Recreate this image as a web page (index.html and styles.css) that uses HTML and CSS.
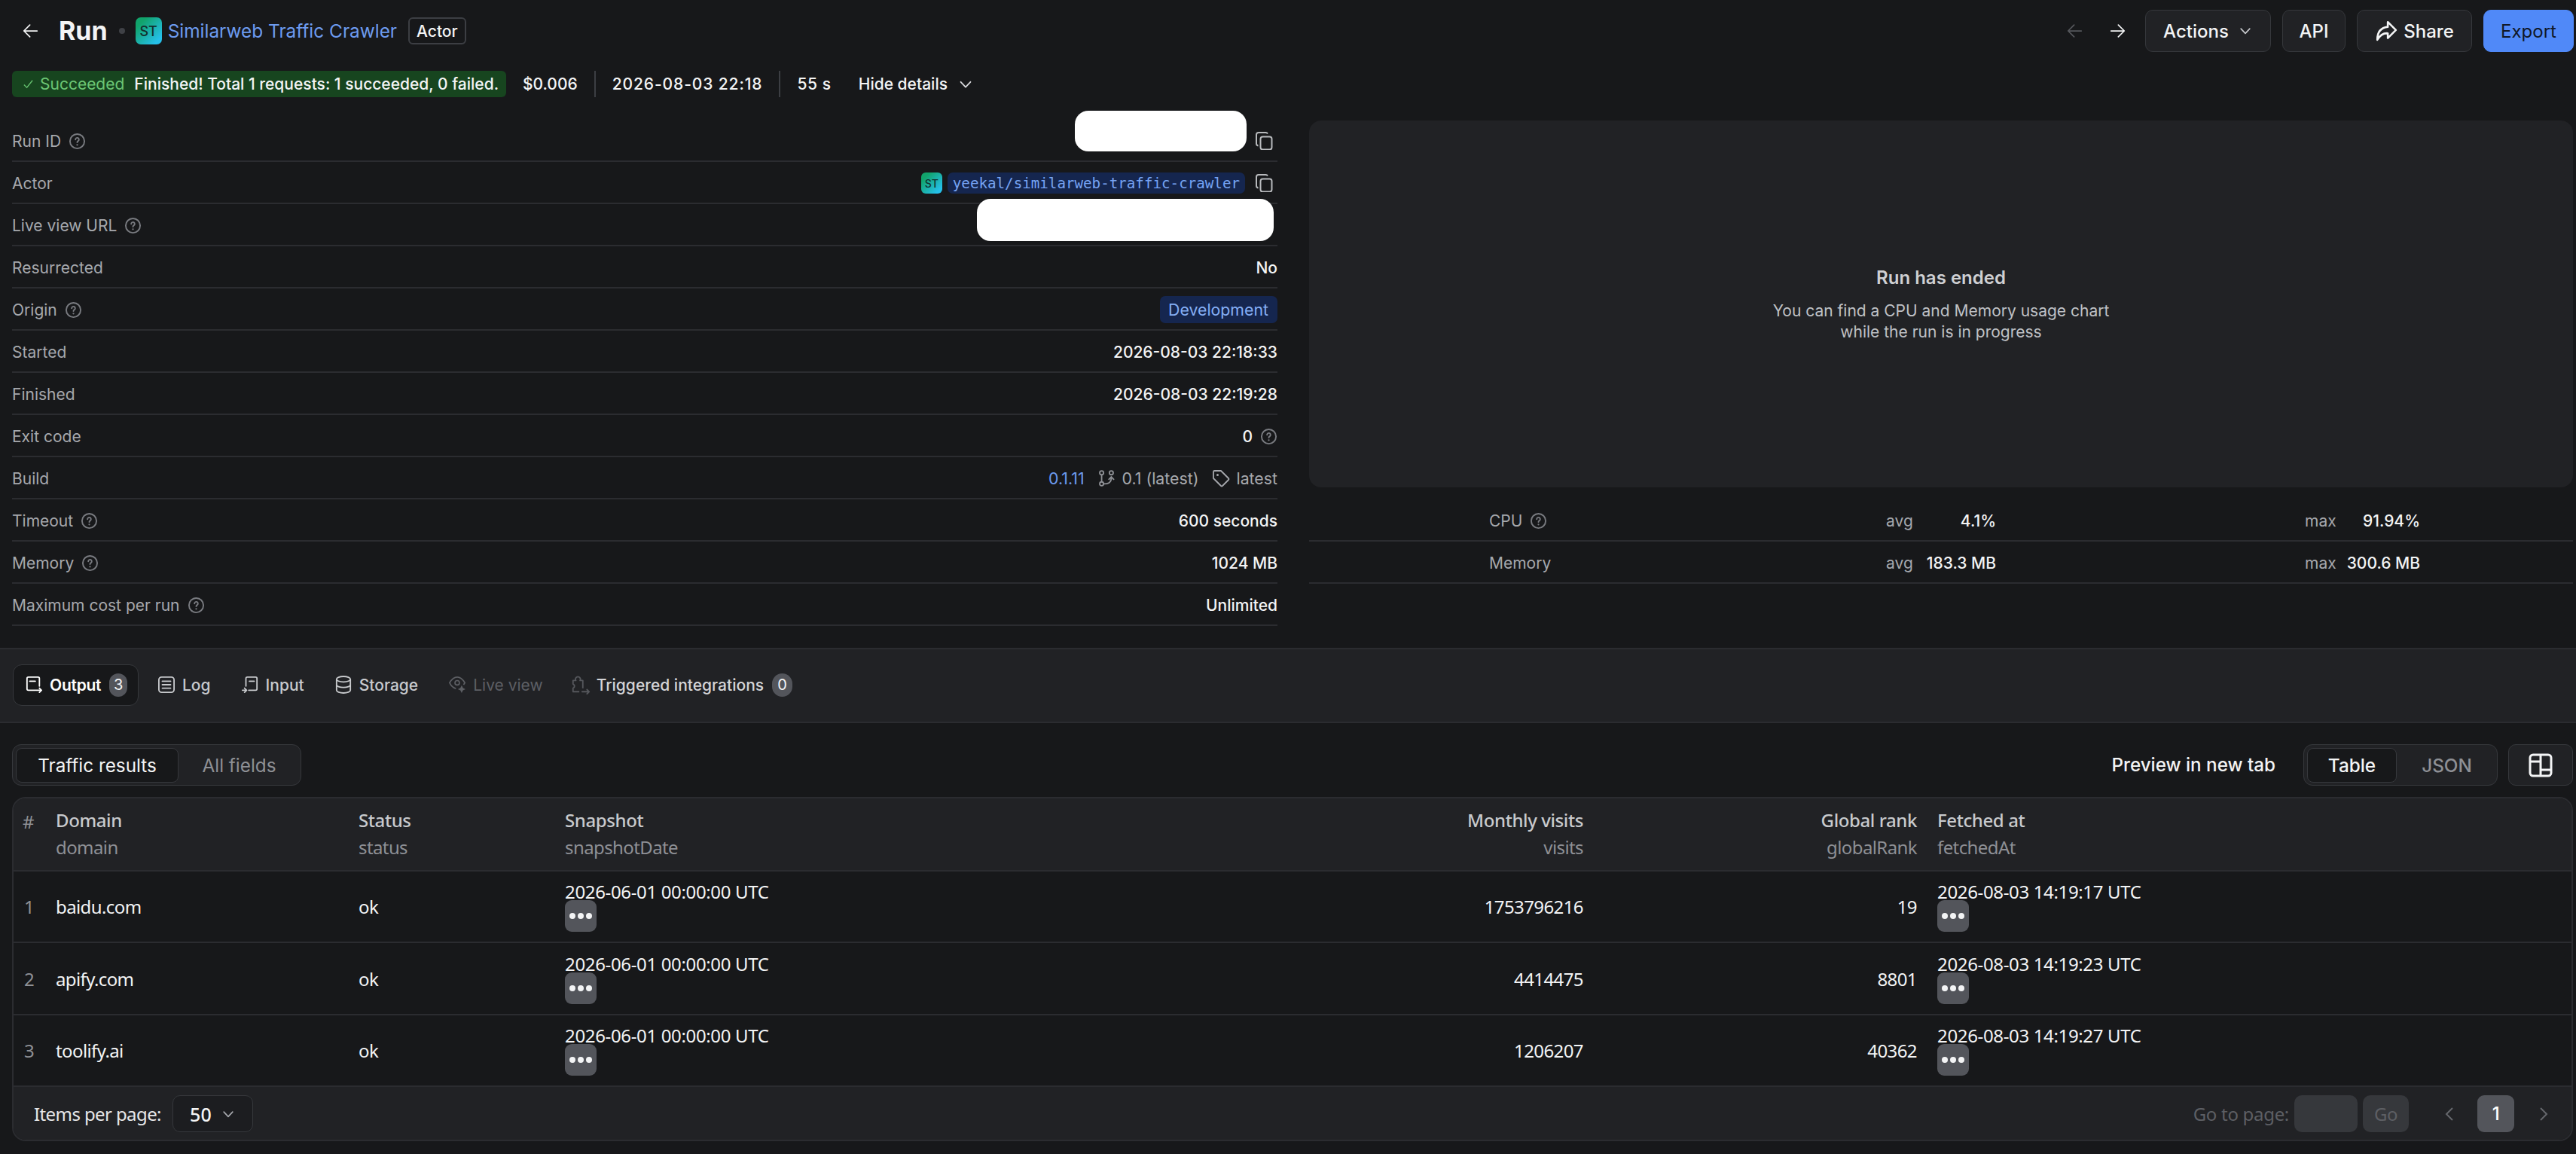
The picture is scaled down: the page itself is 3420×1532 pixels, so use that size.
FILE: index.html
```html
<!DOCTYPE html>
<html lang="en">
<head>
<meta charset="utf-8">
<title>Run</title>
<link rel="stylesheet" href="styles.css">
</head>
<body>
<svg class="defs" width="0" height="0">
  <symbol id="help" viewBox="0 0 24 24"><circle cx="12" cy="12" r="10" fill="none" stroke="currentColor" stroke-width="2"/><path d="M9.6 9.6a2.4 2.4 0 1 1 3.7 2c-.9.6-1.3 1-1.3 1.9" fill="none" stroke="currentColor" stroke-width="2" stroke-linecap="round"/><circle cx="12" cy="17" r="1.2" fill="currentColor"/></symbol>
  <symbol id="copy" viewBox="0 0 24 24"><rect x="7.5" y="6.5" width="15" height="17" rx="3" fill="none" stroke="currentColor" stroke-width="2"/><path d="M4.5 18.5A3 3 0 0 1 2 15.500V4a3 3 0 0 1 3-3h9.500a3 3 0 0 1 2.500 1.500" fill="none" stroke="currentColor" stroke-width="2"/></symbol>
  <symbol id="chev" viewBox="0 0 24 24"><path d="M5 8.500l7 7.500 7-7.500" fill="none" stroke="currentColor" stroke-width="2" stroke-linecap="round" stroke-linejoin="round"/></symbol>
  <symbol id="arrow-l" viewBox="0 0 24 24"><path d="M22 12H3M11 3l-9 9 9 9" fill="none" stroke="currentColor" stroke-width="2" stroke-linecap="round" stroke-linejoin="round"/></symbol>
  <symbol id="arrow-r" viewBox="0 0 24 24"><path d="M2 12h19M13 3l9 9-9 9" fill="none" stroke="currentColor" stroke-width="2" stroke-linecap="round" stroke-linejoin="round"/></symbol>
</svg>

<header class="topbar">
  <div class="title-group">
    <svg class="back-icon"><use href="#arrow-l"/></svg>
    <h1 class="page-title">Run</h1>
    <span class="dot"></span>
    <span class="actor-logo">ST</span>
    <a class="actor-link">Similarweb Traffic Crawler</a>
    <span class="actor-tag">Actor</span>
  </div>
  <div class="top-actions">
    <svg class="nav-arrow nav-off"><use href="#arrow-l"/></svg>
    <svg class="nav-arrow"><use href="#arrow-r"/></svg>
    <button class="btn btn-actions">Actions<svg class="btn-chev"><use href="#chev"/></svg></button>
    <button class="btn btn-api">API</button>
    <button class="btn btn-share"><svg class="share-icon" viewBox="0 0 28 28"><path d="M16 3l10 10-10 10v-6c-5-.5-9 1.500-13 8 0-9 4-15 13-16z" fill="none" stroke="currentColor" stroke-width="2.400" stroke-linejoin="round"/></svg>Share</button>
    <button class="btn btn-export">Export</button>
  </div>
</header>

<div class="status-row">
  <div class="status-badge">
    <svg class="check" viewBox="0 0 16 16"><path d="M2 9l4 4 8-10" fill="none" stroke="currentColor" stroke-width="1.500"/></svg>
    <span class="status-word">Succeeded</span>
    <span class="status-msg">Finished! Total 1 requests: 1 succeeded, 0 failed.</span>
  </div>
  <span class="meta meta-cost">$0.006</span>
  <span class="meta meta-date">2026-08-03 22:18</span>
  <span class="meta meta-dur">55 s</span>
  <span class="hide-details">Hide details<svg class="hide-chev"><use href="#chev"/></svg></span>
</div>

<section class="details">
  <div class="info-list">
    <div class="info-row"><span class="label">Run ID<svg class="help"><use href="#help"/></svg></span><span class="value"><svg class="copy"><use href="#copy"/></svg></span><span class="redact redact-id"></span></div>
    <div class="info-row"><span class="label">Actor</span><span class="value"><span class="actor-logo actor-logo-sm">ST</span><span class="mono-chip">yeekal/similarweb-traffic-crawler</span><svg class="copy"><use href="#copy"/></svg></span></div>
    <div class="info-row"><span class="label">Live view URL<svg class="help"><use href="#help"/></svg></span><span class="redact redact-url"></span></div>
    <div class="info-row"><span class="label">Resurrected</span><span class="value strong">No</span></div>
    <div class="info-row"><span class="label">Origin<svg class="help"><use href="#help"/></svg></span><span class="dev-chip">Development</span></div>
    <div class="info-row"><span class="label">Started</span><span class="value strong">2026-08-03 22:18:33</span></div>
    <div class="info-row"><span class="label">Finished</span><span class="value strong">2026-08-03 22:19:28</span></div>
    <div class="info-row"><span class="label">Exit code</span><span class="value strong">0<svg class="help help-after"><use href="#help"/></svg></span></div>
    <div class="info-row"><span class="label">Build</span><span class="value build">
      <span class="build-no">0.1.11</span>
      <svg class="build-icon" viewBox="0 0 24 24"><g fill="none" stroke="currentColor" stroke-width="2"><circle cx="5" cy="4" r="2.800"/><circle cx="5" cy="20" r="2.800"/><circle cx="19" cy="4" r="2.800"/><path d="M5 7v10M8 20c6 0 11-1 11-9M15 14l4-4 4 4"/></g></svg>
      <span class="build-txt">0.1 (latest)</span>
      <svg class="tag-icon" viewBox="0 0 24 24"><path d="M2 3.500A1.500 1.500 0 0 1 3.500 2H12l10 10a1.500 1.500 0 0 1 0 2l-8 8a1.500 1.500 0 0 1-2 0L2 12z" fill="none" stroke="currentColor" stroke-width="1.800" stroke-linejoin="round"/><circle cx="7.500" cy="7.500" r="1.500" fill="currentColor"/></svg>
      <span class="build-txt">latest</span>
    </span></div>
    <div class="info-row"><span class="label">Timeout<svg class="help"><use href="#help"/></svg></span><span class="value strong">600 seconds</span></div>
    <div class="info-row"><span class="label">Memory<svg class="help"><use href="#help"/></svg></span><span class="value strong">1024 MB</span></div>
    <div class="info-row"><span class="label">Maximum cost per run<svg class="help"><use href="#help"/></svg></span><span class="value strong">Unlimited</span></div>
  </div>
  <div class="usage">
    <div class="chart-panel">
      <h2 class="chart-title">Run has ended</h2>
      <p class="chart-text">You can find a CPU and Memory usage chart<br>while the run is in progress</p>
    </div>
    <div class="usage-row"><span class="u-name">CPU<svg class="help"><use href="#help"/></svg></span><span class="u-key">avg</span><span class="u-val">4.1%</span><span class="u-key2">max</span><span class="u-val2">91.94%</span></div>
    <div class="usage-row"><span class="u-name">Memory</span><span class="u-key">avg</span><span class="u-val">183.3 MB</span><span class="u-key2">max</span><span class="u-val2">300.6 MB</span></div>
  </div>
</section>

<nav class="tabs">
  <div class="tab tab-on">
    <svg class="tab-icon" viewBox="0 0 24 26"><g fill="none" stroke="currentColor" stroke-width="2" stroke-linecap="round" stroke-linejoin="round"><path d="M14 21H4a2 2 0 0 1-2-2V4a2 2 0 0 1 2-2h14a2 2 0 0 1 2 2v11"/><path d="M6 8h8M15 21h8M20 18l3 3-3 3"/></g></svg>
    <span class="tab-on-text">Output</span><span class="count">3</span></div>
  <div class="tab">
    <svg class="tab-icon" viewBox="0 0 24 26"><g fill="none" stroke="currentColor" stroke-width="2" stroke-linecap="round"><rect x="1" y="2" width="22" height="22" rx="4"/><path d="M6 8h12M6 13h12M6 18h12"/></g></svg>
    Log</div>
  <div class="tab">
    <svg class="tab-icon" viewBox="0 0 24 26"><g fill="none" stroke="currentColor" stroke-width="2" stroke-linecap="round" stroke-linejoin="round"><path d="M6 15V4a2 2 0 0 1 2-2h12a2 2 0 0 1 2 2v15a2 2 0 0 1-2 2H10"/><path d="M11 8h7M1 21h6M4 18l3 3-3 3"/></g></svg>
    Input</div>
  <div class="tab">
    <svg class="tab-icon" viewBox="0 0 24 26"><g fill="none" stroke="currentColor" stroke-width="2"><ellipse cx="12" cy="5" rx="10" ry="4"/><path d="M2 5v16c0 2.200 4.500 4 10 4s10-1.800 10-4V5M2 13c0 2.200 4.500 4 10 4s10-1.800 10-4"/></g></svg>
    Storage</div>
  <div class="tab tab-off">
    <svg class="tab-icon" viewBox="0 0 26 28"><g fill="none" stroke="currentColor" stroke-width="2"><path d="M11 20C6 19 3 15 1 11c3-5 7-9 12-9s9 4 12 9l-2 3"/><circle cx="13" cy="11" r="3.500"/></g><path d="M20 15l2 4 4 2-4 2-2 4-2-4-4-2 4-2z" fill="currentColor"/></svg>
    Live view</div>
  <div class="tab tab-trig">
    <svg class="tab-icon tab-icon-wide" viewBox="0 0 28 28"><path d="M17 19V8h-4a3.500 3.500 0 1 0-6 0H3v5a3.200 3.200 0 0 1 0 6v5h9" fill="none" stroke="currentColor" stroke-width="2" stroke-linejoin="round"/><path d="M16 24h10M23 21l3 3-3 3" fill="none" stroke="currentColor" stroke-width="2" stroke-linecap="round" stroke-linejoin="round"/></svg>
    Triggered integrations<span class="count">0</span></div>
</nav>

<section class="output">
  <div class="output-bar">
    <div class="seg">
      <span class="seg-item seg-on seg-traffic">Traffic results</span>
      <span class="seg-item seg-all">All fields</span>
    </div>
    <div class="output-right">
      <span class="preview">Preview in new tab</span>
      <div class="seg">
        <span class="seg-item seg-on seg-table">Table</span>
        <span class="seg-item seg-json">JSON</span>
      </div>
      <button class="layout-btn"><svg class="layout-icon" viewBox="0 0 32 32"><g fill="none" stroke="currentColor" stroke-width="3"><rect x="2" y="2" width="28" height="28" rx="4"/><path d="M2 11h14M16 2v28M16 22h14"/></g></svg></button>
    </div>
  </div>

  <div class="data-table">
    <div class="t-row t-head">
      <div class="c c-num c-hash">#</div>
      <div class="c"><div class="h1">Domain</div><div class="h2">domain</div></div>
      <div class="c"><div class="h1">Status</div><div class="h2">status</div></div>
      <div class="c"><div class="h1">Snapshot</div><div class="h2">snapshotDate</div></div>
      <div class="c c-r"><div class="h1">Monthly visits</div><div class="h2">visits</div></div>
      <div class="c c-r"><div class="h1">Global rank</div><div class="h2">globalRank</div></div>
      <div class="c"><div class="h1">Fetched at</div><div class="h2">fetchedAt</div></div>
    </div>
    <div class="t-row t-body">
      <div class="c c-num">1</div><div class="c">baidu.com</div><div class="c">ok</div>
      <div class="c c-date">2026-06-01 00:00:00 UTC<span class="more"><i></i><i></i><i></i></span></div>
      <div class="c c-r">1753796216</div><div class="c c-r">19</div>
      <div class="c c-date">2026-08-03 14:19:17 UTC<span class="more"><i></i><i></i><i></i></span></div>
    </div>
    <div class="t-row t-body">
      <div class="c c-num">2</div><div class="c">apify.com</div><div class="c">ok</div>
      <div class="c c-date">2026-06-01 00:00:00 UTC<span class="more"><i></i><i></i><i></i></span></div>
      <div class="c c-r">4414475</div><div class="c c-r">8801</div>
      <div class="c c-date">2026-08-03 14:19:23 UTC<span class="more"><i></i><i></i><i></i></span></div>
    </div>
    <div class="t-row t-body">
      <div class="c c-num">3</div><div class="c">toolify.ai</div><div class="c">ok</div>
      <div class="c c-date">2026-06-01 00:00:00 UTC<span class="more"><i></i><i></i><i></i></span></div>
      <div class="c c-r">1206207</div><div class="c c-r">40362</div>
      <div class="c c-date">2026-08-03 14:19:27 UTC<span class="more"><i></i><i></i><i></i></span></div>
    </div>
    <div class="t-foot">
      <div class="foot-left">
        <span class="items-label">Items per page:</span>
        <button class="per-page">50<svg class="per-chev"><use href="#chev"/></svg></button>
      </div>
      <div class="foot-right">
        <span class="go-label">Go to page:</span>
        <span class="go-input"></span>
        <span class="go-btn">Go</span>
        <svg class="pg-chev pg-prev" viewBox="0 0 12 20"><path d="M10 2L2 10l8 8" fill="none" stroke="currentColor" stroke-width="2"/></svg>
        <span class="pg-cur">1</span>
        <svg class="pg-chev pg-next" viewBox="0 0 12 20"><path d="M2 2l8 8-8 8" fill="none" stroke="currentColor" stroke-width="2"/></svg>
      </div>
    </div>
  </div>
</section>
</body>
</html>
```

FILE: styles.css
```css
* { box-sizing: border-box; }
html, body { margin: 0; padding: 0; }
body {
  width: 3420px; height: 1532px; overflow: hidden;
  background: #17181a; color: #f3f4f5;
  font-family: Inter, "Liberation Sans", sans-serif;
  font-size: 22px;
}
button { font: inherit; color: inherit; }
.defs { position: absolute; }

/* top bar */
.topbar { height: 82px; padding: 0 3px 0 30px; display: flex; align-items: center; justify-content: space-between; }
.title-group { display: flex; align-items: center; }
.back-icon { width: 21px; height: 22px; color: #f3f4f5; margin-right: 27px; }
.page-title { margin: 0; font-size: 34px; font-weight: 700; line-height: 40px; }
.dot { width: 8px; height: 8px; border-radius: 50%; background: #3f4146; margin: 0 14px 0 15px; }
.actor-logo {
  width: 35px; height: 36px; border-radius: 7px; display: flex; align-items: center; justify-content: center;
  background: linear-gradient(135deg, #11a36b 20%, #25c0ea 85%); color: #12312f; font-size: 18px; font-weight: 500;
}
.actor-logo-sm { width: 28px; height: 28px; font-size: 14px; border-radius: 6px; margin-right: 7px; }
.actor-link { color: #6d9bef; font-size: 24.400px; margin-left: 8px; }
.actor-tag { margin-left: 15px; height: 36px; padding: 0 9px; border: 2px solid #3c3e43; border-radius: 6px; font-size: 21px; font-weight: 500; display: flex; align-items: center; }
.top-actions { display: flex; align-items: center; }
.nav-arrow { width: 21px; height: 22px; margin-right: 36px; color: #f3f4f5; position: relative; left: 2px; }
.nav-off { color: #55575c; }
.nav-arrow + .btn { margin-left: -8px; }
.btn { height: 56px; border: 1px solid #36383c; border-radius: 10px; background: #212225; display: flex; align-items: center; justify-content: center; font-size: 24px; font-weight: 500; margin-right: 15px; padding: 0; }
.btn-actions { width: 167px; }
.btn-chev { width: 20px; height: 20px; margin-left: 12px; color: #c5c7cb; }
.btn-api { width: 84px; }
.btn-share { width: 153px; }
.share-icon { width: 30px; height: 30px; margin-right: 8px; }
.btn-export { width: 120px; margin-right: 0; background: #5089f8; border-color: #5089f8; color: #101828; font-weight: 400; }

/* status line */
.status-row { height: 35px; margin-top: 12px; padding-left: 16px; display: flex; align-items: center; }
.status-badge { width: 656px; height: 35px; background: #17451f; border-radius: 6px; display: flex; align-items: center; padding-left: 14px; white-space: nowrap; }
.check { width: 15px; height: 15px; color: #63bd6d; margin-right: 8px; }
.status-word { color: #6cc574; font-size: 21px; margin-right: 13px; }
.status-msg { font-size: 21px; font-weight: 500; }
.meta { height: 35px; display: flex; align-items: center; font-size: 21px; font-weight: 500; }
.meta-cost { margin-left: 22px; padding-right: 22px; border-right: 2px solid #3c3e43; }
.meta-date { padding: 0 22px; border-right: 2px solid #3c3e43; letter-spacing: .9px; }
.meta-dur { padding-left: 22px; letter-spacing: .6px; }
.hide-details { margin-left: 36px; font-size: 21px; font-weight: 500; display: flex; align-items: center; }
.hide-chev { width: 22px; height: 22px; margin-left: 13px; color: #d6d7da; }

/* details */
.details { height: 702px; padding-left: 16px; display: flex; align-items: flex-start; margin-top: 30px; }
.info-list { width: 1680px; flex: none; }
.info-row { height: 56px; padding-top: 2px; border-bottom: 2px solid #2b2c30; display: flex; align-items: center; justify-content: space-between; position: relative; }
.label { color: #a6a8ad; font-size: 21px; display: flex; align-items: center; }
.help { width: 23px; height: 23px; margin-left: 10px; color: #797b80; }
.help-after { margin-left: 10px; }
.value { display: flex; align-items: center; font-size: 21px; }
.strong { font-weight: 500; color: #f3f4f5; }
.copy { width: 24px; height: 24px; color: #b8babd; margin-left: 13px; margin-right: 6px; }
.mono-chip { height: 28px; padding: 0 7px; display: flex; align-items: center; background: #15264f; border-radius: 7px; color: #77a4f3; font-family: "DejaVu Sans Mono", "Liberation Mono", monospace; font-size: 19.200px; }
.redact { position: absolute; background: #fff; }
.redact-id { right: 41px; top: -12px; width: 228px; height: 54px; border-radius: 18px; }
.redact-url { right: 5px; top: -7px; width: 394px; height: 56px; border-radius: 18px; }
.dev-chip { height: 36px; padding: 0 12px 0 11px; display: flex; align-items: center; background: #15264f; border-radius: 7px; color: #85aef5; font-size: 21.300px; }
.build { font-size: 21.300px; }
.build-no { color: #6d9bef; margin-right: 18px; }
.build-icon { width: 22px; height: 24px; color: #8e9095; margin-right: 10px; }
.build-txt { color: #a6a8ad; }
.tag-icon { width: 24px; height: 24px; color: #a6a8ad; margin: 0 8px 0 18px; }

.usage { margin-left: 42px; width: 1678px; }
.chart-panel { height: 487px; background: #212225; border-radius: 16px; display: flex; flex-direction: column; align-items: center; padding-top: 194px; margin: 1px 0 16px; }
.chart-title { margin: 0; font-size: 24px; font-weight: 600; color: #cfd0d3; line-height: 30px; }
.chart-text { margin: 15px 0 0; font-size: 21px; line-height: 28px; color: #bfc1c5; text-align: center; }
.usage-row { height: 56px; padding-top: 2px; display: flex; align-items: center; font-size: 21px; border-bottom: 2px solid #2b2c30; position: relative; }
.u-name { width: 766px; padding-left: 239px; color: #a6a8ad; display: flex; align-items: center; }
.u-key { width: 40px; color: #a6a8ad; }
.u-val { width: 106px; text-align: right; font-weight: 500; }
.u-key2 { margin-left: 410px; width: 40px; color: #a6a8ad; }
.u-val2 { width: 113px; text-align: right; font-weight: 500; }

/* tabs */
.tabs { height: 100px; margin-top: -1px; background: #212225; border-top: 2px solid #2b2c30; border-bottom: 2px solid #2b2c30; padding: 0 0 2px 17px; display: flex; align-items: center; color: #c8cacd; font-size: 21px; font-weight: 500; }
.tab { height: 55px; padding: 0 14px 0 16px; display: flex; align-items: center; white-space: nowrap; margin-right: 11px; }
.tab-on { width: 167px; background: #17181a; border: 1px solid #36383c; border-radius: 12px; color: #fff; font-weight: 600; margin-right: 10px; }
.tab-on-text { letter-spacing: -.25px; }
.tab-off { color: #5d5f64; font-weight: 400; }
.tab-trig { margin-left: -4px; color: #d4d5d8; }
.tab-icon { width: 22px; height: 26px; margin-right: 10px; flex: none; }
.tab-icon-wide { width: 26px; height: 26px; margin-right: 8px; color: #55575c; }
.count { width: 27px; height: 31px; margin-left: 11px; border-radius: 14px; background: #53555b; color: #f3f4f5; font-weight: 400; font-size: 20px; display: flex; align-items: center; justify-content: center; }

/* output */
.output { padding: 28px 4px 0 16px; }
.output-bar { display: flex; justify-content: space-between; align-items: center; height: 55px; }
.output-right { display: flex; align-items: center; }
.preview { font-size: 24.200px; font-weight: 500; margin-right: 37px; }
.seg { height: 55px; background: #212225; border: 1px solid #36383c; border-radius: 12px; display: flex; align-items: center; padding: 0 4px; font-size: 24.300px; }
.seg-item { height: 46px; display: flex; align-items: center; justify-content: center; color: #8e9095; }
.seg-on { background: #17181a; border: 1px solid #36383c; border-radius: 8px; color: #f3f4f5; }
.seg-traffic { width: 216px; }
.seg-all { width: 158px; padding-left: 3px; }
.seg-table { width: 119px; font-weight: 500; }
.seg-json { width: 129px; padding-left: 4px; font-weight: 500; }
.layout-btn { width: 86px; height: 55px; margin-left: 14px; background: #212225; border: 1px solid #36383c; border-radius: 10px; display: flex; align-items: center; justify-content: center; padding: 0; color: #f3f4f5; }
.layout-icon { width: 32px; height: 32px; }

.data-table { margin-top: 15px; height: 457px; border: 2px solid #2b2c30; border-radius: 18px; overflow: hidden; font-family: "Noto Sans", "Open Sans", sans-serif; font-size: 24px; letter-spacing: -0.6px; }
.t-row { display: grid; grid-template-columns: 56px 402px 274px 650px 702px 443px 1fr; align-items: center; border-bottom: 2px solid #2b2c30; }
.t-head { height: 97px; background: #212225; }
.t-body { height: 95px; color: #f3f4f5; }
.t-body:nth-child(3) { height: 96px; }
.c { min-width: 0; }
.c-num { padding-left: 14px; color: #8e9095; }
.c-hash { padding-left: 12px; align-self: start; margin-top: 15px; line-height: 32px; }
.c-r { text-align: right; }
.t-row > .c:nth-child(7) { padding-left: 27px; }
.h1 { font-weight: 500; color: #c8cacd; line-height: 32px; letter-spacing: -.4px; }
.h2 { color: #8e9095; line-height: 34px; margin-top: 3px; }
.c-date { line-height: 28px; letter-spacing: -.35px; display: flex; flex-direction: column; align-items: flex-start; }
.more { width: 42px; height: 42px; margin-top: -3px; background: #53555b; border-radius: 9px; display: flex; align-items: center; justify-content: center; gap: 3px; }
.more i { width: 8px; height: 8px; background: #f3f4f5; border-radius: 50%; }
.t-foot { height: 71px; background: #212225; display: flex; align-items: center; justify-content: space-between; padding: 0 31px 0 27px; }
.foot-left, .foot-right { display: flex; align-items: center; }
.items-label { color: #e6e7e9; }
.per-page { width: 107px; height: 49px; margin-left: 15px; background: #1c1d20; border: 1px solid #36383c; border-radius: 10px; display: flex; align-items: center; justify-content: center; padding: 0; color: #f3f4f5; font-weight: 500; letter-spacing: 0; font-size: 25px; }
.per-chev { width: 20px; height: 20px; margin-left: 12px; color: #a6a8ad; }
.go-label { color: #5d5f64; letter-spacing: -.3px; }
.go-input { width: 84px; height: 49px; margin-left: 7px; background: #36383c; border-radius: 10px; }
.go-btn { width: 61px; height: 49px; margin-left: 7px; background: #36383c; border-radius: 10px; color: #5d5f64; display: flex; align-items: center; justify-content: center; }
.pg-chev { width: 12px; height: 20px; color: #65676c; }
.pg-prev { margin-left: 48px; }
.pg-cur { width: 49px; height: 49px; margin: 0 33px 0 31px; background: #53555b; border-radius: 9px; display: flex; align-items: center; justify-content: center; color: #fff; font-family: Inter, sans-serif; font-weight: 500; }
```
